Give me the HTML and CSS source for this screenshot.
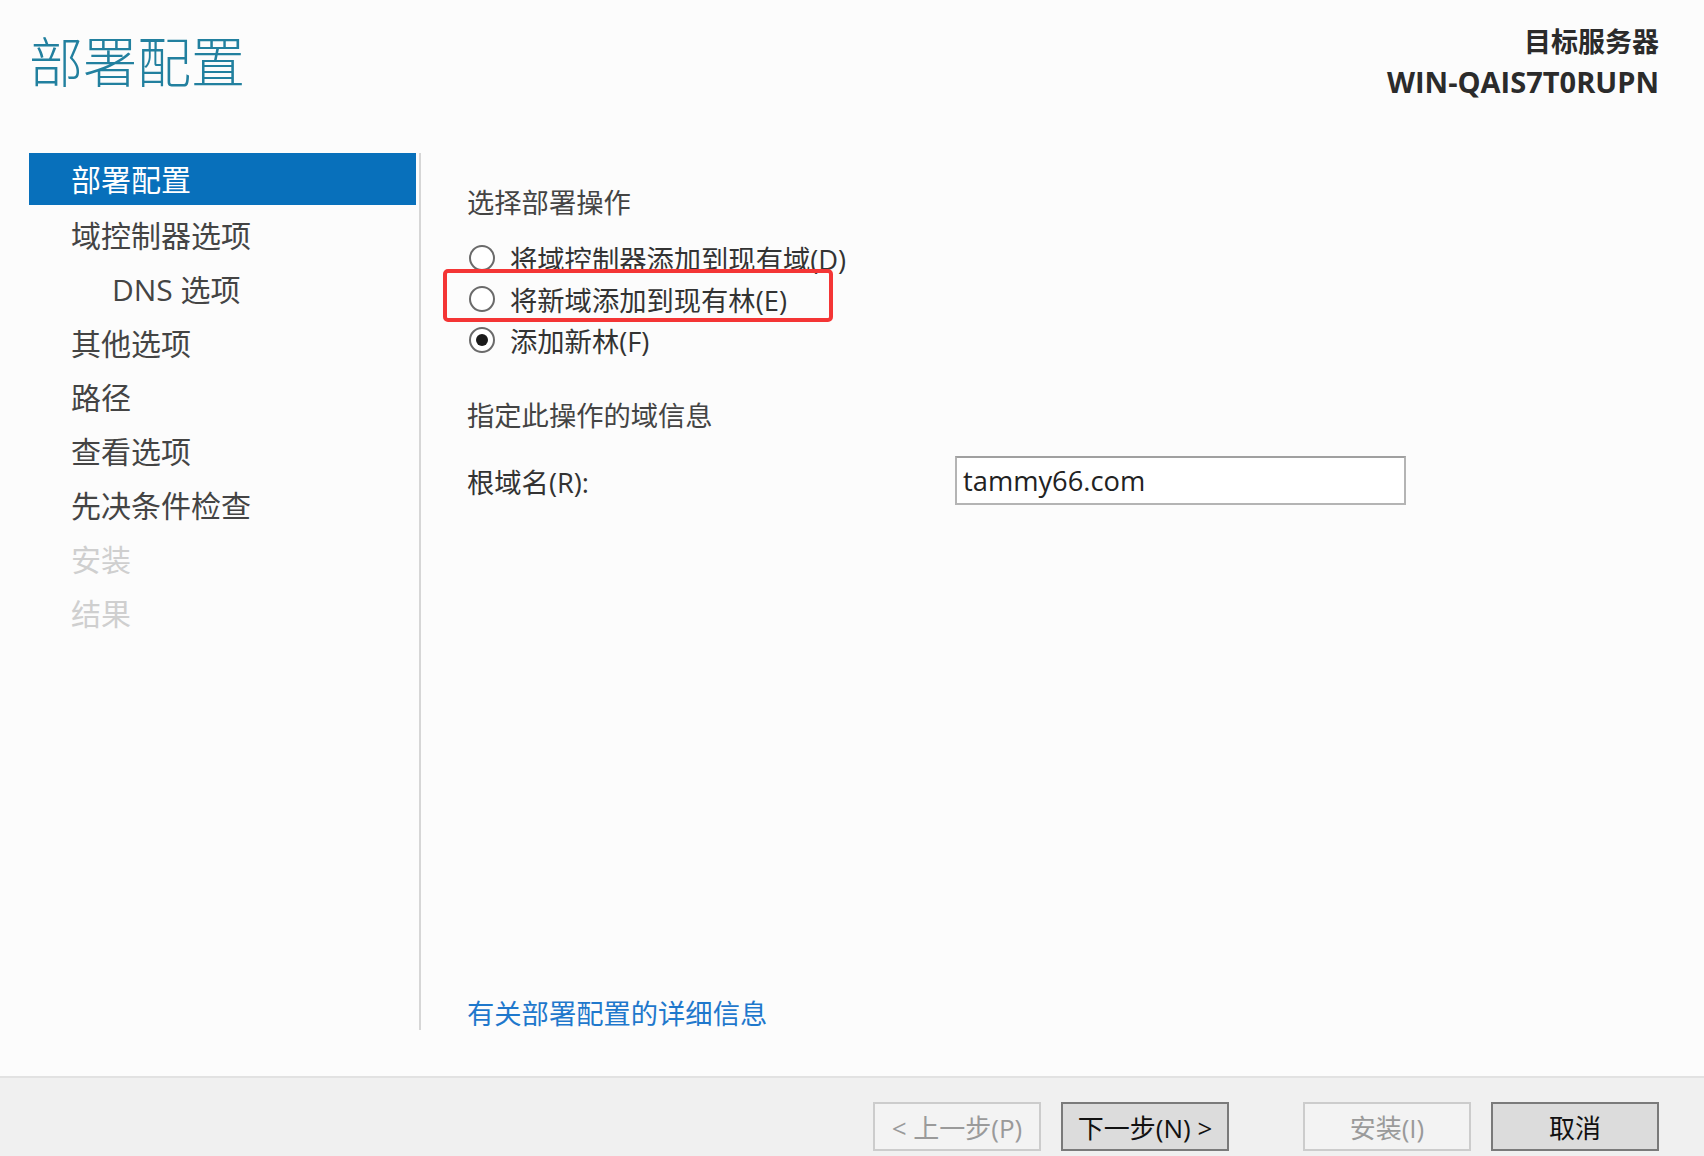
FILE: index.html
```
<!DOCTYPE html>
<html>
<head>
    <meta charset="UTF-8">
    <link rel="stylesheet" href="styles.css">
</head>
<body>
    <div class="wizard">
        <div class="header">
            <h1 class="title">部署配置</h1>
            <div class="target">
                <div class="label">目标服务器</div>
                <div class="server">WIN-QAIS7T0RUPN</div>
            </div>
        </div>

        <div class="main">
            <ul class="steps">
                <li class="step active">部署配置</li>
                <li class="step">域控制器选项</li>
                <li class="step sub">DNS 选项</li>
                <li class="step">其他选项</li>
                <li class="step">路径</li>
                <li class="step">查看选项</li>
                <li class="step">先决条件检查</li>
                <li class="step disabled">安装</li>
                <li class="step disabled">结果</li>
            </ul>

            <div class="content">
                <div class="section-title">选择部署操作</div>
                <div class="radio-list">
                    <label class="radio-row">
                        <span class="radio"></span>
                        <span>将域控制器添加到现有域(D)</span>
                    </label>
                    <label class="radio-row">
                        <span class="radio"></span>
                        <span>将新域添加到现有林(E)</span>
                        <span class="highlight"></span>
                    </label>
                    <label class="radio-row">
                        <span class="radio checked"></span>
                        <span>添加新林(F)</span>
                    </label>
                </div>

                <div class="section-title second">指定此操作的域信息</div>
                <div class="field-row">
                    <span class="field-label">根域名(R):</span>
                    <div class="field-input">tammy66.com</div>
                </div>

                <a class="more-link" href="#">有关部署配置的详细信息</a>
            </div>
        </div>

        <div class="footer">
            <button class="btn" disabled>&lt; 上一步(P)</button>
            <button class="btn primary">下一步(N) &gt;</button>
            <button class="btn spaced" disabled>安装(I)</button>
            <button class="btn primary">取消</button>
        </div>
    </div>
</body>
</html>
```

FILE: styles.css
```
* {
    margin: 0;
    padding: 0;
    box-sizing: border-box;
}

body {
    background: #fcfcfc;
    font-family: "Open Sans", "Noto Sans CJK SC", sans-serif;
    color: #3c3c3c;
}

.wizard {
    height: 100vh;
    display: flex;
    flex-direction: column;
}

.header {
    height: 153px;
    display: flex;
    justify-content: space-between;
    align-items: flex-start;
    padding: 0 45px 0 29px;
}

.title {
    margin-top: 27px;
    font-size: 54px;
    line-height: 70px;
    font-weight: 300;
    color: #22809f;
}

.target {
    margin-top: 22px;
    text-align: right;
    font-weight: bold;
    color: #2b2b2b;
}

.target .label {
    font-size: 27px;
    line-height: 40px;
}

.target .server {
    font-size: 29px;
    line-height: 40px;
}

.main {
    flex: 1;
    display: flex;
}

.steps {
    list-style: none;
    width: 392px;
    margin-left: 29px;
    margin-bottom: 46px;
    border-right: 2px solid #d6d6d6;
    padding-right: 3px;
}

.step {
    height: 54px;
    line-height: 58px;
    padding-left: 42px;
    font-size: 30px;
    color: #444;
}

.step.active {
    height: 52px;
    line-height: 54px;
    margin-bottom: 2px;
    background: #0870bb;
    color: #fff;
}

.step.sub {
    padding-left: 83px;
}

.step.disabled {
    color: #cfcfcf;
}

.content {
    flex: 1;
    display: flex;
    flex-direction: column;
    padding: 30px 0 42px 46px;
    font-size: 27.3px;
}

.section-title {
    line-height: 40px;
    color: #444;
}

.section-title.second {
    margin-top: 36px;
}

.radio-list {
    margin-top: 14px;
}

.radio-row {
    position: relative;
    display: flex;
    align-items: center;
    gap: 15px;
    height: 41px;
    padding-left: 2px;
    color: #333;
}

.radio {
    width: 26px;
    height: 26px;
    border: 2px solid #6a6a6a;
    border-radius: 50%;
    background: #fff;
    display: flex;
    justify-content: center;
    align-items: center;
}

.radio.checked::after {
    content: "";
    width: 12px;
    height: 12px;
    border-radius: 50%;
    background: #1a1a1a;
}

.highlight {
    position: absolute;
    left: -24px;
    top: -9px;
    width: 390px;
    height: 53px;
    border: 4px solid #f43535;
    border-radius: 5px;
}

.field-row {
    display: flex;
    align-items: center;
    margin-top: 20px;
}

.field-label {
    width: 488px;
    color: #333;
}

.field-input {
    width: 451px;
    height: 49px;
    line-height: 45px;
    padding-left: 6px;
    border: 2px solid #b4b4b4;
    border-top-color: #a0a0a0;
    background: #fff;
    color: #222;
}

.more-link {
    margin-top: auto;
    line-height: 40px;
    color: #1f78cc;
    text-decoration: none;
}

.footer {
    height: 80px;
    flex-shrink: 0;
    display: flex;
    justify-content: flex-end;
    align-items: flex-start;
    gap: 20px;
    padding: 24px 45px 0 0;
    background: #f0f0f0;
    border-top: 2px solid #e2e2e2;
}

.btn {
    width: 168px;
    height: 49px;
    font-family: "Open Sans", "Noto Sans CJK SC", sans-serif;
    font-size: 26px;
    background: #dcdcdc;
    border: 2px solid #7a7a7a;
    color: #111;
}

.btn:disabled {
    background: #f3f3f3;
    border-color: #cccccc;
    color: #9a9a9a;
}

.btn.spaced {
    margin-left: 54px;
}
```
